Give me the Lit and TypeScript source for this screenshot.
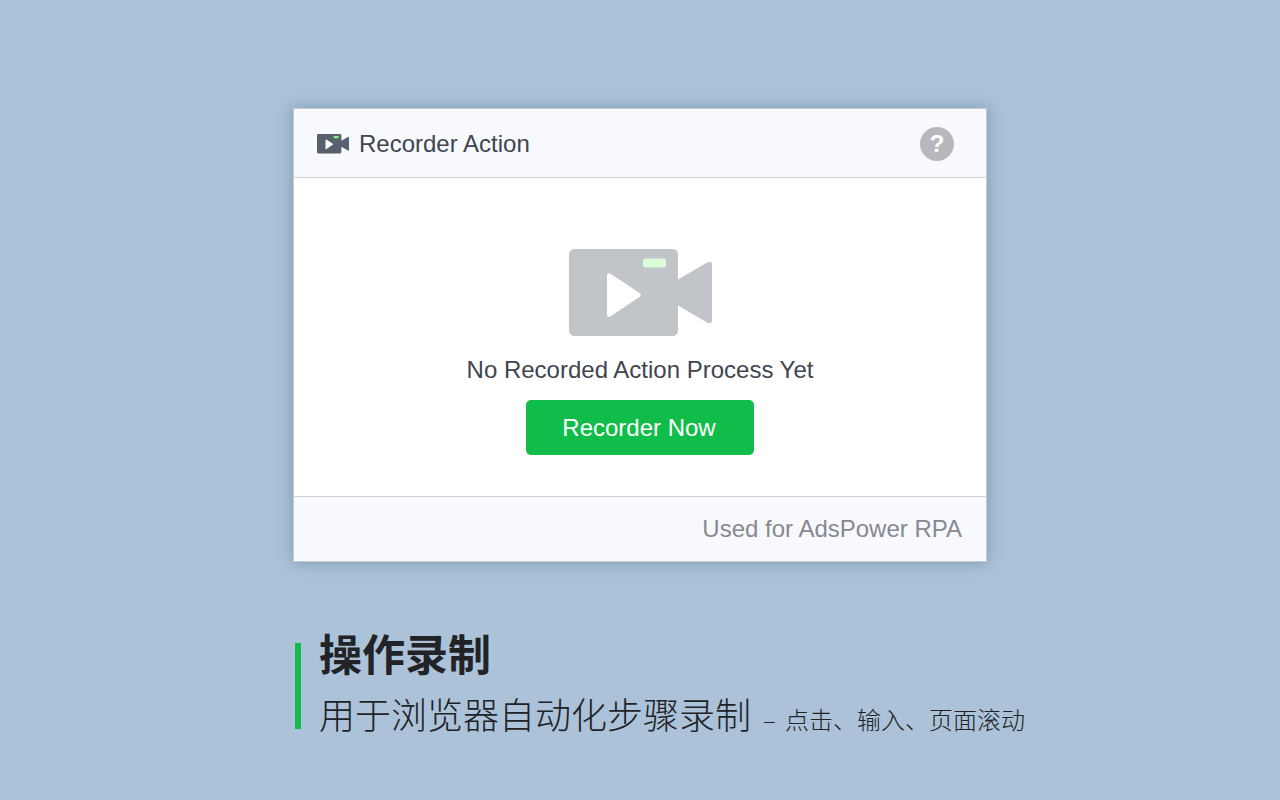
import { LitElement, html, css } from "lit";
import { customElement } from "lit/decorators.js";

@customElement("camera-icon")
class CameraIcon extends LitElement {
  static styles = css`
    :host { display: block; color: #c1c4c9; --lamp: #dbfcd9; }
    svg { display: block; width: 100%; }
  `;
  render() {
    return html`<svg viewBox="0 0 143 87" aria-hidden="true">
      <path fill="currentColor" d="M6 0H103Q109 0 109 6V30.500L138.500 13.200Q143 11.500 143 15.500V71Q143 75.500 138.500 73.800L109 56.500V81Q109 87 103 87H6Q0 87 0 81V6Q0 0 6 0Z"/>
      <path fill="#fff" d="M38 26.500C38 24 40 23.500 42 25L70.500 44Q73 46 70.500 48L42 67C40 68.500 38 68 38 65.500Z"/>
      <rect x="74" y="9.500" width="23" height="9" rx="2.500" fill="var(--lamp)"/>
    </svg>`;
  }
}

@customElement("app-root")
class AppRoot extends LitElement {
  static styles = css`
    :host {
      display: block;
      box-sizing: border-box;
      min-height: 100vh;
      padding: 108px 24px 24px;
      background: #abc2d8;
      color: #40454f;
      font-family: "Liberation Sans", Arial, sans-serif;
      font-size: 24px;
      line-height: 28px;
    }
    * { box-sizing: border-box; }
    .page { max-width: 694px; margin: 0 auto; }
    .card {
      background: #fff;
      border: 1px solid #c8cccf;
      box-shadow: 0 0 14px rgba(80, 105, 125, 0.5);
    }
    .head, .foot { display: flex; align-items: center; background: #f8f9fd; }
    .head { padding: 18px 32px 16px 23px; border-bottom: 1px solid #d0d3d6; }
    .logo { width: 32px; margin-right: 10px; color: #58606d; --lamp: #8af08a; }
    h1, h2, p { margin: 0; font-size: inherit; font-weight: 400; }
    .help {
      margin-left: auto;
      width: 34px;
      height: 34px;
      padding: 0;
      border: 0;
      border-radius: 50%;
      background: #b8b7bc;
      color: #fff;
      font: 700 24px/34px "Liberation Sans", Arial, sans-serif;
    }
    .body {
      display: flex;
      flex-direction: column;
      align-items: center;
      padding: 71px 24px 41px;
    }
    .camera { width: 143px; margin-bottom: 20px; }
    .record {
      margin-top: 16px;
      padding: 14px 38px 13px 36px;
      border: 0;
      border-radius: 5px;
      background: #11bd4a;
      color: #fff;
      font: inherit;
    }
    .foot {
      justify-content: flex-end;
      padding: 18px 24px;
      border-top: 1px solid #d0d3d6;
      color: #888893;
    }
    .caption {
      display: flex;
      align-items: center;
      gap: 18px;
      margin: 60px 0 0 2px;
      color: #212327;
      font-family: "Noto Sans CJK SC", sans-serif;
      white-space: nowrap;
    }
    .bar { flex: none; width: 6px; height: 86px; background: #11bd4a; }
    .title { font-size: 43px; line-height: 60px; font-weight: 700; }
    .sub { font-size: 36px; line-height: 62px; font-weight: 300; }
    .note { font-size: 24px; margin-left: 12px; }
    .dash { margin-right: 4px; }
  `;
  render() {
    return html`<main class="page">
      <section class="card">
        <header class="head">
          <camera-icon class="logo"></camera-icon>
          <h1>Recorder Action</h1>
          <button class="help" aria-label="Help">?</button>
        </header>
        <div class="body">
          <camera-icon class="camera"></camera-icon>
          <p>No Recorded Action Process Yet</p>
          <button class="record">Recorder Now</button>
        </div>
        <footer class="foot">Used for AdsPower RPA</footer>
      </section>
      <section class="caption">
        <div class="bar"></div>
        <div>
          <h2 class="title">操作录制</h2>
          <p class="sub">用于浏览器自动化步骤录制<span class="note"><span class="dash">–</span> 点击、输入、页面滚动</span></p>
        </div>
      </section>
    </main>`;
  }
}
